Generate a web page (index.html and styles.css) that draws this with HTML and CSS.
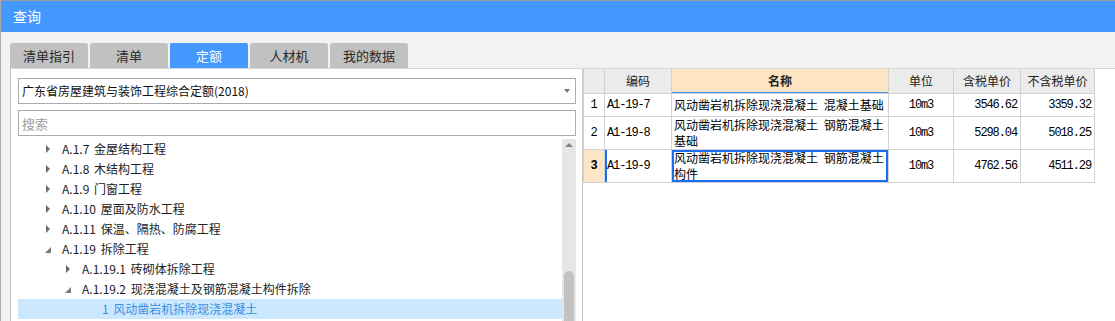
FILE: index.html
```html
<!DOCTYPE html>
<html lang="zh-CN">

<head>
    <meta charset="UTF-8">
    <meta name="viewport" content="width=device-width, initial-scale=1.0">
    <title>查询</title>
    <link rel="stylesheet" href="styles.css">
</head>

<body>
    <header class="titlebar">查询</header>

    <ul class="tabs">
        <li>清单指引</li>
        <li>清单</li>
        <li class="on">定额</li>
        <li>人材机</li>
        <li>我的数据</li>
    </ul>

    <div class="content">
        <section class="left">
            <div class="select">
                <span>广东省房屋建筑与装饰工程综合定额(2018)</span>
                <i class="caret"></i>
            </div>
            <div class="search">搜索</div>

            <div class="tree">
                <ul class="tree_list">
                    <li class="lv1"><i class="arr"></i>A.1.7 金屋结构工程</li>
                    <li class="lv1"><i class="arr"></i>A.1.8 木结构工程</li>
                    <li class="lv1"><i class="arr"></i>A.1.9 门窗工程</li>
                    <li class="lv1"><i class="arr"></i>A.1.10 屋面及防水工程</li>
                    <li class="lv1"><i class="arr"></i>A.1.11 保温、隔热、防腐工程</li>
                    <li class="lv1"><i class="arr open"></i>A.1.19 拆除工程</li>
                    <li class="lv2"><i class="arr"></i>A.1.19.1 砖砌体拆除工程</li>
                    <li class="lv2"><i class="arr open"></i>A.1.19.2 现浇混凝土及钢筋混凝土构件拆除</li>
                    <li class="lv3 on"><i class="arr none"></i>1 风动凿岩机拆除现浇混凝土</li>
                </ul>
                <div class="scrollbar">
                    <i class="up"></i>
                    <div class="thumb"></div>
                </div>
            </div>
        </section><!-- .left end -->

        <section class="right">
            <table class="grid">
                <colgroup>
                    <col class="c_no">
                    <col class="c_code">
                    <col class="c_name">
                    <col class="c_unit">
                    <col class="c_price">
                    <col class="c_price2">
                </colgroup>
                <thead>
                    <tr>
                        <th></th>
                        <th>编码</th>
                        <th class="sort">名称</th>
                        <th>单位</th>
                        <th>含税单价</th>
                        <th>不含税单价</th>
                    </tr>
                </thead>
                <tbody>
                    <tr class="r1">
                        <td class="no">1</td>
                        <td class="mono">A1-19-7</td>
                        <td class="name">风动凿岩机拆除现浇混凝土 混凝土基础</td>
                        <td class="mono unit">10m3</td>
                        <td class="mono num">3546.62</td>
                        <td class="mono num">3359.32</td>
                    </tr>
                    <tr class="r2">
                        <td class="no">2</td>
                        <td class="mono">A1-19-8</td>
                        <td class="name">风动凿岩机拆除现浇混凝土 钢筋混凝土基础</td>
                        <td class="mono unit">10m3</td>
                        <td class="mono num">5298.04</td>
                        <td class="mono num">5018.25</td>
                    </tr>
                    <tr class="r3 on">
                        <td class="no">3</td>
                        <td class="mono">A1-19-9</td>
                        <td class="name">风动凿岩机拆除现浇混凝土 钢筋混凝土构件</td>
                        <td class="mono unit">10m3</td>
                        <td class="mono num">4762.56</td>
                        <td class="mono num">4511.29</td>
                    </tr>
                </tbody>
            </table>
        </section><!-- .right end -->
    </div><!-- .content end -->
</body>

</html>
```

FILE: styles.css
```css
@charset "utf-8";

* {
    margin: 0;
    padding: 0;
    box-sizing: border-box;
}

li {
    list-style: none;
}

html,
body {
    height: 100%;
    overflow: hidden;
}

body {
    display: flex;
    flex-direction: column;
    background-color: #f2f2f2;
    border-left: 1px solid #a9a9a9;
    font-family: "Noto Sans CJK SC", "Noto Sans", sans-serif;
    font-size: 12px;
    line-height: 1;
    color: #222;
}

/* 상단 타이틀 */
.titlebar {
    height: 32px;
    flex: none;
    line-height: 31px;
    padding-left: 12px;
    border-top: 1px solid #9c9c9c;
    background-color: #4399ff;
    color: #fff;
    font-size: 14px;
}

.tabs {
    display: flex;
    flex: none;
    gap: 2px;
    padding: 11px 0 0 9px;
}

.tabs li {
    width: 78px;
    height: 25px;
    line-height: 25px;
    text-align: center;
    font-size: 13px;
    color: #2a2a2a;
    background-color: #c1c1c1;
    border-radius: 2px 2px 0 0;
}

.tabs li.on {
    background-color: #4399ff;
    color: #fff;
}

.content {
    flex: 1;
    display: flex;
    min-height: 0;
    overflow: hidden;
    margin-left: 9px;
    background-color: #fff;
    border-top: 1px solid #d6d6d6;
    border-left: 1px solid #c4c4c4;
}

/* 왼쪽 트리 */
.left {
    width: 571px;
    display: flex;
    flex-direction: column;
    padding: 9px 6px 0 7px;
}

.select,
.search {
    height: 26px;
    flex: none;
    border: 1px solid #ababab;
    display: flex;
    align-items: center;
    padding-left: 3px;
}

.select {
    justify-content: space-between;
    padding-right: 5px;
    color: #111;
}

.caret {
    width: 0;
    height: 0;
    border-left: 3px solid transparent;
    border-right: 3px solid transparent;
    border-top: 4px solid #7a7a7a;
}

.search {
    margin-top: 6px;
    color: #a0a0a0;
    font-size: 13px;
}

.tree {
    flex: 1;
    display: flex;
    margin-top: 3px;
    min-height: 0;
}

.tree_list {
    flex: 1;
}

.tree_list li {
    height: 20px;
    display: flex;
    align-items: center;
    color: #222;
    word-spacing: 2px;
}

.tree_list li.lv1 {
    padding-left: 27px;
}

.tree_list li.lv2 {
    padding-left: 47px;
}

.tree_list li.lv3 {
    padding-left: 67px;
}

.tree_list li.on {
    background-color: #cce8ff;
    color: #3a8de0;
}

.arr {
    width: 17px;
    height: 20px;
    flex: none;
    position: relative;
}

.arr::before {
    content: "";
    position: absolute;
    left: 1px;
    top: 6px;
    border-top: 4px solid transparent;
    border-bottom: 4px solid transparent;
    border-left: 4px solid #6a6a6a;
}

.arr.open::before {
    left: 0;
    top: 8px;
    border-top: 6px solid transparent;
    border-bottom: 0;
    border-left: 0;
    border-right: 6px solid #7a7a7a;
}

.arr.none::before {
    display: none;
}

.scrollbar {
    width: 14px;
    flex: none;
    background-color: #e6e6e6;
    position: relative;
}

.scrollbar .up {
    position: absolute;
    left: 3px;
    top: 4px;
    border-left: 4px solid transparent;
    border-right: 4px solid transparent;
    border-bottom: 4px solid #858585;
}

.scrollbar .thumb {
    position: absolute;
    left: 2px;
    right: 2px;
    top: 132px;
    bottom: 0;
    background-color: #c2c2c2;
    border-radius: 5px 5px 0 0;
}

/* 오른쪽 그리드 */
.right {
    flex: 1;
    border-left: 1px solid #c8c8c8;
}

.grid {
    width: 511px;
    table-layout: fixed;
    border-collapse: collapse;
    color: #000;
}

.c_no { width: 21px; }
.c_code { width: 67px; }
.c_name { width: 217px; }
.c_unit { width: 65px; }
.c_price { width: 67px; }
.c_price2 { width: 74px; }

.grid th,
.grid td {
    border: 1px solid #d2d2d2;
    vertical-align: middle;
}

.grid th {
    height: 24px;
    background-color: #ebebeb;
    font-weight: normal;
    font-size: 12px;
    color: #222;
    border-top: 0;
}

.grid th.sort {
    background-color: #fde4c3;
    font-weight: bold;
    box-shadow: inset 0 -1px 0 #3f93ec;
}

.grid td {
    padding: 0 2px;
    line-height: 16px;
}

.grid tr.r1 td { height: 23px; }
.grid tr.r2 td { height: 33px; }
.grid tr.r3 td { height: 32px; }

.grid td.no {
    text-align: center;
    font-family: "Liberation Mono", monospace;
    font-size: 12px;
    padding: 0;
}

.grid tr.on td.no {
    background-color: #fde6c8;
    font-weight: bold;
}

.grid tr.on td:nth-child(2) {
    box-shadow: inset 2px 0 0 #1a6ff0;
}

.grid tr.on td.name {
    box-shadow: inset 0 0 0 2px #1a6ff0;
}

.mono {
    font-family: "Liberation Mono", monospace;
    font-size: 12px;
    letter-spacing: -1.1px;
}

.grid td.unit {
    text-align: center;
}

.grid td.num {
    text-align: right;
    padding-right: 3px;
}

.grid td.name {
    font-size: 12px;
    letter-spacing: 0;
    word-spacing: 3px;
}
```
